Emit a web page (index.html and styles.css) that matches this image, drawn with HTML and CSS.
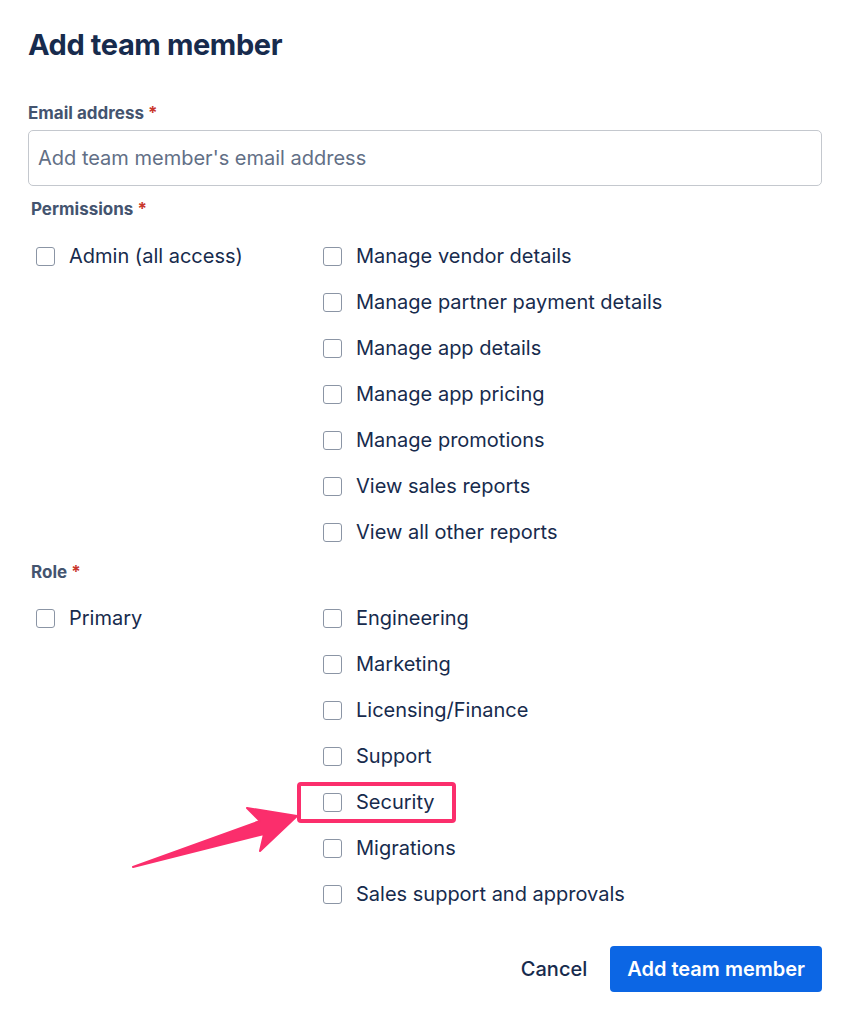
FILE: index.html
```html
<!DOCTYPE html>
<html lang="en">
<head>
<meta charset="utf-8">
<title>Add team member</title>
<link rel="stylesheet" href="styles.css">
</head>
<body>
<div class="dialog">
  <h1 class="title">Add team member</h1>

  <div class="field">
    <label class="label" for="email">Email address <span class="req">*</span></label>
    <input id="email" class="input" type="text" placeholder="Add team member's email address">
  </div>

  <div class="group">
    <div class="label label-inset">Permissions <span class="req">*</span></div>
    <div class="grid">
      <div class="col">
        <label class="check"><span class="box"></span>Admin (all access)</label>
      </div>
      <div class="col">
        <label class="check"><span class="box"></span>Manage vendor details</label>
        <label class="check"><span class="box"></span>Manage partner payment details</label>
        <label class="check"><span class="box"></span>Manage app details</label>
        <label class="check"><span class="box"></span>Manage app pricing</label>
        <label class="check"><span class="box"></span>Manage promotions</label>
        <label class="check"><span class="box"></span>View sales reports</label>
        <label class="check"><span class="box"></span>View all other reports</label>
      </div>
    </div>
  </div>

  <div class="group">
    <div class="label label-inset">Role <span class="req">*</span></div>
    <div class="grid">
      <div class="col">
        <label class="check"><span class="box"></span>Primary</label>
      </div>
      <div class="col">
        <label class="check"><span class="box"></span>Engineering</label>
        <label class="check"><span class="box"></span>Marketing</label>
        <label class="check"><span class="box"></span>Licensing/Finance</label>
        <label class="check"><span class="box"></span>Support</label>
        <label class="check highlighted"><span class="box"></span>Security</label>
        <label class="check"><span class="box"></span>Migrations</label>
        <label class="check"><span class="box"></span>Sales support and approvals</label>
      </div>
    </div>
  </div>

  <div class="footer">
    <button class="btn btn-subtle" type="button">Cancel</button>
    <button class="btn btn-primary" type="button">Add team member</button>
  </div>
</div>

<svg class="annotation" width="852" height="1024" viewBox="0 0 852 1024" aria-hidden="true">
  <rect x="299" y="784" width="155" height="37" rx="2" fill="none" stroke="#fb2e6c" stroke-width="4"/>
  <polygon points="133,867 260,821 247,808 297,816 260,851 264,834" fill="#fb2e6c" stroke="#fb2e6c" stroke-width="2" stroke-linejoin="round"/>
</svg>
</body>
</html>
```

FILE: styles.css
```css
* { box-sizing: border-box; }

html, body {
  margin: 0;
  padding: 0;
  background: #ffffff;
}

body {
  font-family: Inter, "Noto Sans", "Liberation Sans", sans-serif;
  color: #172b4d;
  position: relative;
  width: 852px;
  height: 1024px;
  overflow: hidden;
}

.dialog {
  padding: 24px 30px 0 28px;
  display: flex;
  flex-direction: column;
}

.title {
  margin: 0;
  font-size: 29px;
  line-height: 42px;
  font-weight: 700;
  color: #172b4d;
  letter-spacing: -0.4px;
}

.field {
  margin-top: 34px;
  display: flex;
  flex-direction: column;
}

.label {
  font-size: 17px;
  line-height: 24px;
  font-weight: 700;
  color: #44546f;
}

.field .label {
  margin-top: 1px;
  margin-bottom: -1px;
}

.label-inset {
  padding-left: 3px;
}

.req {
  color: #c9372c;
}

.input {
  margin-top: 6px;
  height: 56px;
  width: 794px;
  border: 1.5px solid #c4c8ce;
  border-radius: 5px;
  padding: 0 9px;
  font-family: inherit;
  font-size: 20px;
  color: #172b4d;
  outline: none;
}

.input::placeholder {
  color: #626f86;
}

.group {
  margin-top: 11px;
  display: flex;
  flex-direction: column;
}

.group + .group {
  margin-top: 5px;
}

.grid {
  margin-top: 12px;
  display: grid;
  grid-template-columns: 287px 1fr;
  padding-left: 8px;
}

.group + .group .grid {
  margin-top: 11px;
}

.col {
  display: flex;
  flex-direction: column;
}

.check {
  height: 46px;
  display: flex;
  align-items: center;
  gap: 14px;
  font-size: 20px;
  color: #172b4d;
}

.box {
  width: 19px;
  height: 19px;
  border: 1.5px solid #8b95a5;
  border-radius: 3px;
  flex: none;
  background: #fff;
}

.footer {
  margin-top: 29px;
  display: flex;
  justify-content: flex-end;
  gap: 6px;
}

.btn {
  height: 46px;
  border: none;
  border-radius: 4px;
  font-family: inherit;
  font-size: 20px;
  font-weight: 600;
  padding: 0 17px;
  cursor: pointer;
}

.btn-subtle {
  background: transparent;
  color: #172b4d;
  font-weight: 500;
}

.btn-primary {
  background: #0c66e4;
  color: #ffffff;
}

.annotation {
  position: absolute;
  left: 0;
  top: 0;
  pointer-events: none;
}
```
